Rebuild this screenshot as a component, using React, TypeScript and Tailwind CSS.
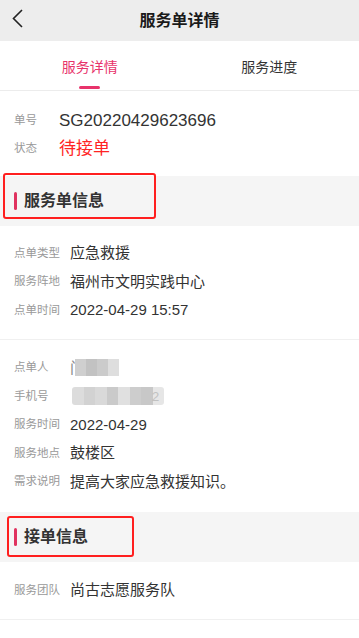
const font = { fontFamily: '"Liberation Sans", "Noto Sans CJK SC", sans-serif' };

const orderRows = [
  { label: '点单类型', value: '应急救援' },
  { label: '服务阵地', value: '福州市文明实践中心' },
  { label: '点单时间', value: '2022-04-29 15:57' },
];

// mosaic cells for the blurred personal info
const nameCells = ['#cfcfcf', '#c2c2c2', '#cbcbcb', '#dedede'];
const phoneCells = ['#dcdcdc', '#d2d2d2', '#d9d9d9', '#cacaca', '#e0e0e0', '#cdcdcd', '#c8c8c8', '#e6e6e6'];

export default function App() {
  return (
    <div className="w-[359px] h-[638px] bg-white overflow-hidden text-[#333]" style={font}>
      {/* nav bar */}
      <div className="relative h-[41px] bg-[#ededed] flex items-center justify-center">
        <svg className="absolute left-[11px] top-[8px]" width="14" height="22" viewBox="0 0 14 22" fill="none">
          <polyline points="11,2 2.5,10.5 11,19" stroke="#222" strokeWidth="1.6" />
        </svg>
        <span className="text-[16px] font-bold text-[#1a1a1a]">服务单详情</span>
      </div>

      {/* tabs */}
      <div className="h-[50px] flex border-b border-[#ececec]">
        <div className="flex-1 flex flex-col items-center">
          <span className="mt-[16px] text-[14px] leading-[20px] text-[#e8336b]">服务详情</span>
          <span className="mt-auto mb-[1px] w-[21px] h-[3px] rounded-full bg-[#e8336b]" />
        </div>
        <div className="flex-1 flex justify-center">
          <span className="mt-[16px] text-[14px] leading-[20px] text-[#333]">服务进度</span>
        </div>
      </div>

      {/* order no & status */}
      <div className="px-[14px] pt-[16px] pb-[13px]">
        <div className="h-[28px] flex items-center">
          <span className="w-[45px] text-[11.5px] text-[#999]">单号</span>
          <span className="text-[17px] text-[#333]">SG20220429623696</span>
        </div>
        <div className="h-[28px] flex items-center">
          <span className="w-[45px] text-[11.5px] text-[#999]">状态</span>
          <span className="text-[17px] text-[#ff2424]">待接单</span>
        </div>
      </div>

      <Section title="服务单信息" boxClass="left-[3px] top-[-3px] w-[153px] h-[46px]" />

      <div className="px-[14px] pt-[13px] pb-[14px] border-b border-[#f0f0f0]">
        {orderRows.map((r) => (
          <Row key={r.label} label={r.label}>
            {r.value}
          </Row>
        ))}
      </div>

      <div className="px-[14px] pt-[14px] pb-[16px]">
        <Row label="点单人">
          <div className="flex items-center">
            <span className="text-[15px] text-[#888]">门</span>
            <div className="flex h-[17px] -ml-[10px]">
              {nameCells.map((c, i) => (
                <span key={i} className="w-[11px] h-full" style={{ background: c }} />
              ))}
            </div>
          </div>
        </Row>
        <Row label="手机号">
          <div className="flex items-center ml-[2px]">
            <div className="flex h-[18px] rounded-[3px] overflow-hidden">
              {phoneCells.map((c, i) => (
                <span key={i} className="w-[11.5px] h-full" style={{ background: c }} />
              ))}
            </div>
            <span className="text-[13px] text-[#aaa] -ml-[12px] opacity-60">2</span>
          </div>
        </Row>
        <Row label="服务时间">2022-04-29</Row>
        <Row label="服务地点">鼓楼区</Row>
        <Row label="需求说明">提高大家应急救援知识。</Row>
      </div>

      <Section title="接单信息" boxClass="left-[7px] top-[4px] w-[127px] h-[41px]" />

      <div className="px-[14px] pt-[14px] pb-[14px] border-b border-[#f0f0f0]">
        <Row label="服务团队">尚古志愿服务队</Row>
      </div>
    </div>
  );
}

function Section({ title, boxClass }: { title: string; boxClass: string }) {
  return (
    <div className="relative h-[50px] bg-[#f5f5f5] flex items-center px-[14px]">
      <span className="w-[3px] h-[18px] rounded-full bg-[#e0325f]" />
      <span className="ml-[7px] text-[16px] font-bold text-[#333]">{title}</span>
      {/* red annotation frame */}
      <div className={`absolute border-2 border-[#ff1f1f] rounded-[3px] ${boxClass}`} />
    </div>
  );
}

function Row({ label, children }: { label: string; children: React.ReactNode }) {
  return (
    <div className="h-[28.5px] flex items-center">
      <span className="w-[56px] shrink-0 text-[11.5px] text-[#999]">{label}</span>
      <div className="text-[15px] text-[#333]">{children}</div>
    </div>
  );
}
